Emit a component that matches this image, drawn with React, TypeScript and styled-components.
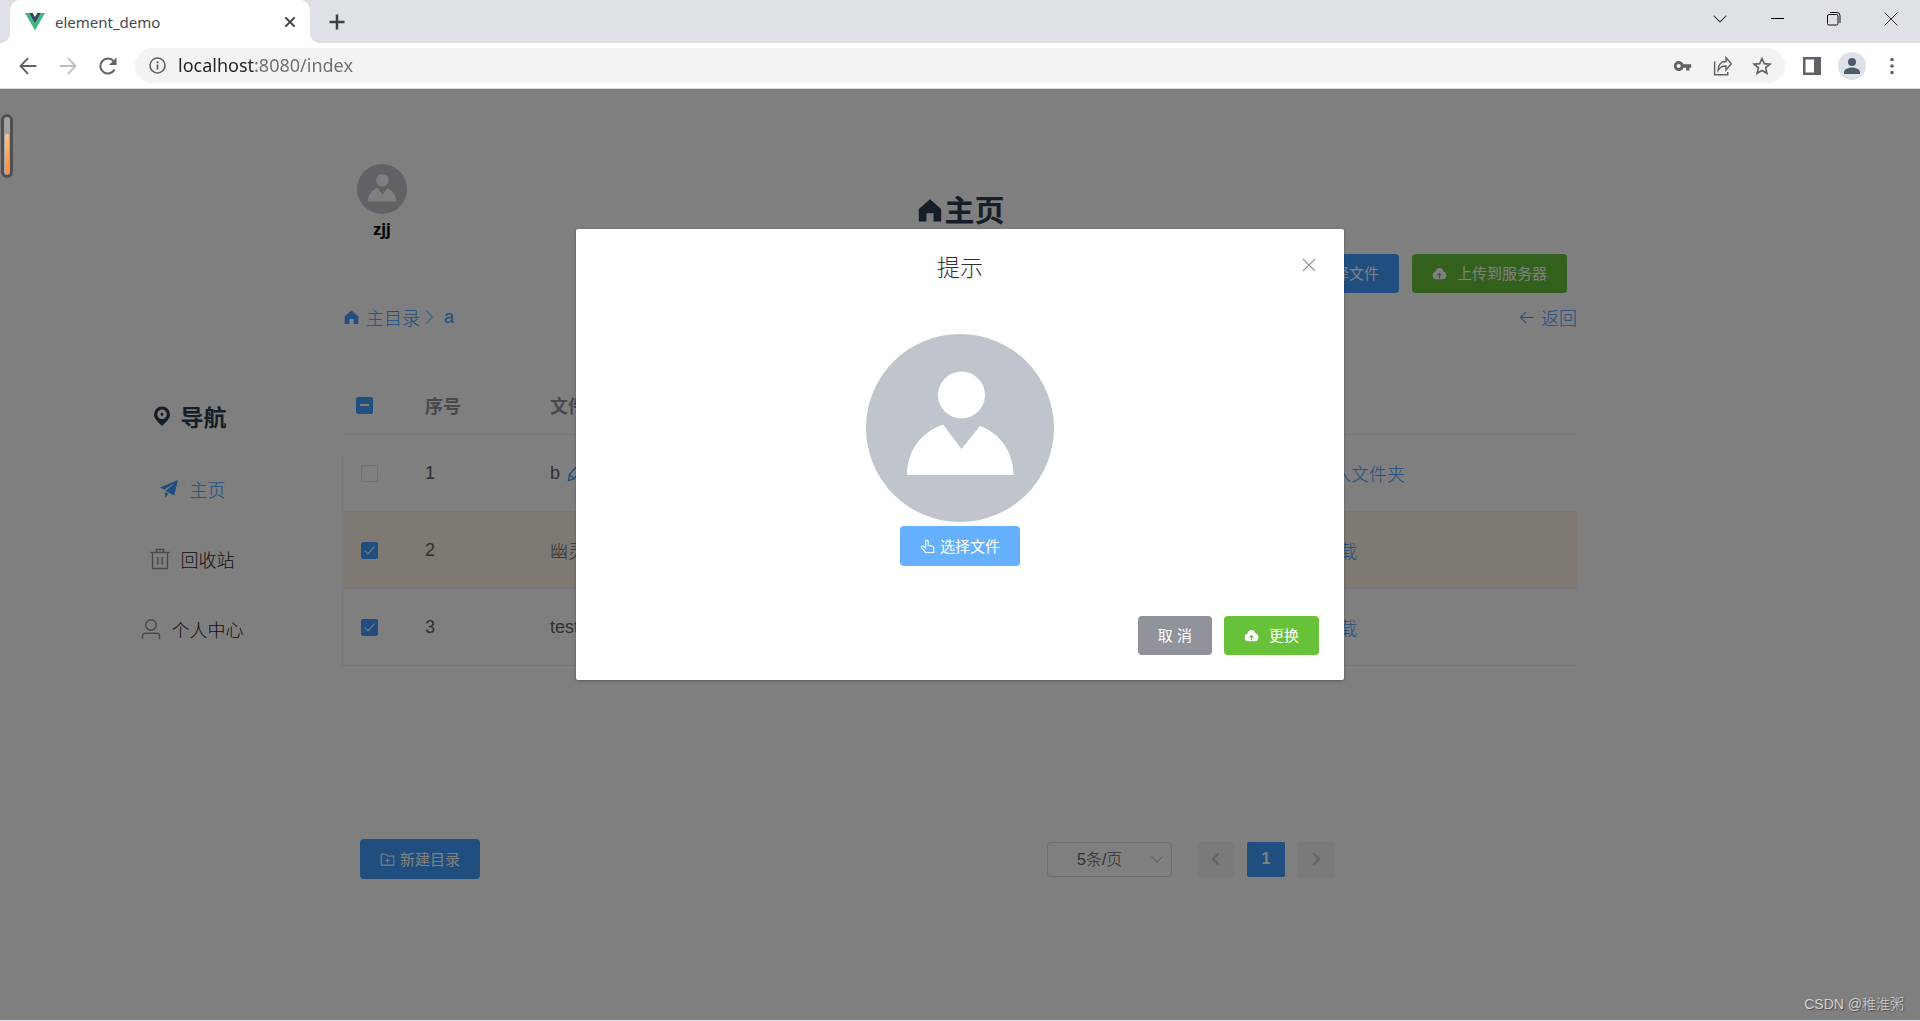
import React from 'react';
import styled, { createGlobalStyle, css } from 'styled-components';

const cjk = `"Liberation Sans", "Noto Sans CJK SC", sans-serif`;
const ui = `"Noto Sans", "Noto Sans CJK SC", sans-serif`;

const GlobalStyle = createGlobalStyle`
  *, *::before, *::after { box-sizing: border-box; }
  body { margin: 0; background: #fff; font-family: ${cjk}; font-size: 18px; font-weight: 300; color: #303133; }
  button, input, select { font: inherit; margin: 0; }
  button { cursor: pointer; }
  a { text-decoration: none; }
  svg { display: block; flex: none; }
`;

const Screen = styled.div`
  min-height: 100vh;
  display: flex;
  flex-direction: column;
  overflow: hidden;
`;

/* ---------- browser frame ---------- */

const TabStrip = styled.header`
  display: flex;
  align-items: center;
  height: 43px;
  padding: 0 17px 0 10px;
  background: #dee1e6;
`;

const Tab = styled.div`
  position: relative;
  display: flex;
  align-items: center;
  gap: 10px;
  width: 300px;
  height: 43px;
  padding: 0 9px 0 15px;
  border-radius: 10px 10px 0 0;
  background: #fff;
  font-family: ${ui};
  font-size: 15px;
  font-weight: 400;
  color: #45484c;

  &::before, &::after {
    content: '';
    position: absolute;
    bottom: 0;
    width: 10px;
    height: 10px;
  }
  &::before {
    right: 100%;
    background: radial-gradient(circle at 0 0, transparent 10px, #fff 10px);
  }
  &::after {
    left: 100%;
    background: radial-gradient(circle at 100% 0, transparent 10px, #fff 10px);
  }
`;

const TabTitle = styled.span`
  flex: 1;
`;

const IconButton = styled.button<{ $size?: number }>`
  display: flex;
  align-items: center;
  justify-content: center;
  flex: none;
  width: ${p => p.$size ?? 24}px;
  height: ${p => p.$size ?? 24}px;
  padding: 0;
  border: 0;
  background: none;
  color: #5f6368;

  &:disabled { color: #bcbfc2; }
`;

const DarkIconButton = styled(IconButton)`
  color: #3c4043;
`;

const NewTab = styled(DarkIconButton)`
  margin-left: 15px;
`;

const WindowButtons = styled.div`
  display: flex;
  align-items: center;
  gap: 33px;
  margin-left: auto;
  padding-bottom: 6px;
`;

const Toolbar = styled.div`
  display: flex;
  align-items: center;
  height: 46px;
  padding: 0 16px;
  border-bottom: 1px solid #d5d7da;
`;

const NavButtons = styled.div`
  display: flex;
  gap: 16px;
`;

const Omnibox = styled.div`
  flex: 1;
  display: flex;
  align-items: center;
  height: 35px;
  margin: 0 15px;
  padding: 0 11px 0 10px;
  border-radius: 18px;
  background: #f1f3f4;
  gap: 9px;
`;

const Address = styled.input`
  flex: 1;
  min-width: 0;
  padding: 0 0 2px;
  border: 0;
  outline: 0;
  font-family: ${ui};
  font-size: 18px;
  font-weight: 400;
  line-height: 26px;
  color: #5f6368;
  background: linear-gradient(90deg, #202124 77px, #6a6e73 77px);
  -webkit-background-clip: text;
  background-clip: text;
  -webkit-text-fill-color: transparent;
`;

const OmniboxActions = styled.div`
  display: flex;
  gap: 16px;
`;

const ToolbarEnd = styled.div`
  display: flex;
  align-items: center;
  gap: 14px;
`;

const Profile = styled(IconButton)`
  border-radius: 50%;
  background: #dee1e6;
  color: #4d5a6e;
`;

/* ---------- page ---------- */

const Page = styled.div`
  position: relative;
  flex: 1;
  padding-top: 75px;
  border-bottom: 1px solid #dcdfe6;
`;

const PageHeader = styled.header`
  display: grid;
  grid-template-columns: 1fr auto 1fr;
  padding: 0 342px;
`;

const User = styled.div`
  display: flex;
  flex-direction: column;
  align-items: center;
  width: 80px;
  font-family: ${ui};
  font-size: 16px;
  font-weight: 700;
  line-height: 30px;
  color: #000;
`;

const PageTitle = styled.h1`
  display: flex;
  align-items: center;
  gap: 1px;
  margin: 0;
  padding-top: 13px;
  font-size: 30px;
  font-weight: 700;
  line-height: 40px;
  color: #2c3e50;
`;

const Actions = styled.div`
  display: flex;
  justify-content: flex-end;
  gap: 13px;
  margin-top: 10px;
  padding: 0 353px;
`;

const tones = {
  primary: '#409eff',
  hover: '#66b1ff',
  success: '#67c23a',
  info: '#909399',
};

const Button = styled.button<{ $tone: keyof typeof tones; $gap?: number }>`
  display: inline-flex;
  align-items: center;
  justify-content: center;
  gap: ${p => p.$gap ?? 5}px;
  height: 39px;
  padding: 0 20px;
  border: 0;
  border-radius: 4px;
  background: ${p => tones[p.$tone]};
  color: #fff;
  font-size: 15px;
  font-weight: 400;
  line-height: 15px;
  white-space: nowrap;
`;

const PathRow = styled.div`
  display: flex;
  justify-content: space-between;
  align-items: center;
  height: 24px;
  margin-top: 12px;
  padding: 0 343px;
`;

const Crumbs = styled.nav`
  display: flex;
  align-items: center;
`;

const TextLink = styled.a<{ $gap?: number }>`
  display: inline-flex;
  align-items: center;
  gap: ${p => p.$gap ?? 6}px;
  color: #409eff;
`;

const Columns = styled.div`
  display: flex;
  margin-top: 47px;
`;

const Sidebar = styled.nav`
  flex: none;
  width: 342px;
  padding: 20px 0 0 40px;
`;

const SidebarTitle = styled.h2`
  display: flex;
  align-items: center;
  justify-content: center;
  gap: 7px;
  height: 40px;
  margin: 0 0 18px;
  padding-right: 6px;
  font-size: 23px;
  font-weight: 700;
  color: #2c3e50;
`;

const SidebarLink = styled.a<{ $active?: boolean }>`
  display: flex;
  align-items: center;
  justify-content: center;
  gap: 9px;
  height: 70px;
  color: ${p => (p.$active ? '#409eff' : '#1d1e20')};

  svg { color: ${p => (p.$active ? '#409eff' : '#909399')}; }
`;

const Main = styled.main`
  flex: 1;
  min-width: 0;
  padding-right: 343px;
`;

const TableFrame = styled.div`
  padding-left: 1px;
  background: linear-gradient(#ebeef5, #ebeef5) left bottom / 1px 211px no-repeat;
`;

const Table = styled.table`
  width: 100%;
  table-layout: fixed;
  border-collapse: separate;
  border-spacing: 0;
  color: #606266;
`;

const cell = css`
  padding: 0 15px;
  border-bottom: 1px solid #ebeef5;
  text-align: left;
  white-space: nowrap;
`;

const Th = styled.th`
  ${cell}
  height: 59px;
  color: #909399;
  font-weight: 700;
`;

const Td = styled.td`
  ${cell}
  height: 77px;
`;

const Row = styled.tr<{ $warm?: boolean }>`
  background: ${p => (p.$warm ? '#fdf5e6' : 'transparent')};
`;

const ColCheck = styled.col` width: 67px; `;
const ColIndex = styled.col` width: 125px; `;
const ColAction = styled.col` width: 295px; `;

const CheckTh = styled(Th)` padding: 0 0 0 13px; `;
const CheckTd = styled(Td)` padding: 0 0 0 18px; `;

const Name = styled.span`
  display: inline-flex;
  align-items: center;
  gap: 6px;
  color: #606266;
  svg { color: #409eff; }
`;

const Check = styled.input<{ $partial?: boolean }>`
  appearance: none;
  display: grid;
  place-items: center;
  width: 17px;
  height: 17px;
  border: 1px solid #dcdfe6;
  border-radius: 2px;
  background: #fff;

  &:checked { border-color: #409eff; background: #409eff; }
  &:checked::after {
    content: '';
    ${p => p.$partial
      ? css`width: 9px; height: 2px; background: #fff;`
      : css`
        width: 5px;
        height: 10px;
        margin-top: -3px;
        border: solid #fff;
        border-width: 0 1px 1px 0;
        transform: rotate(42deg);
      `}
  }
`;

const BottomBar = styled.div`
  display: flex;
  justify-content: space-between;
  align-items: center;
  margin-top: 173px;
  padding: 0 242px 0 18px;
`;

const NewFolder = styled(Button)` height: 40px; `;

const Pagination = styled.div`
  display: flex;
  gap: 12px;
`;

const SizePicker = styled.label`
  display: grid;
  align-items: center;
  width: 125px;
  margin-right: 13px;
  color: #c0c4cc;

  > * { grid-area: 1 / 1; }
  svg { justify-self: end; margin-right: 8px; }
`;

const SizeSelect = styled.select`
  appearance: none;
  width: 100%;
  height: 35px;
  padding: 0 29px;
  border: 1px solid #dcdfe6;
  border-radius: 4px;
  background: #fff;
  font-size: 16px;
  color: #606266;
`;

const PageButton = styled.button<{ $current?: boolean }>`
  display: flex;
  align-items: center;
  justify-content: center;
  width: 38px;
  height: 35px;
  padding: 0;
  border: 0;
  border-radius: 2px;
  font-size: 16px;
  font-weight: 700;
  background: ${p => (p.$current ? '#409eff' : '#f4f4f5')};
  color: ${p => (p.$current ? '#fff' : '#c0c4cc')};
`;

/* ---------- dialog ---------- */

const Overlay = styled.div`
  position: absolute;
  inset: 0;
  display: flex;
  align-items: flex-start;
  justify-content: center;
  padding-top: 140px;
  background: rgba(0, 0, 0, 0.5);
`;

const Dialog = styled.section`
  width: 40%;
  border-radius: 2px;
  background: #fff;
  box-shadow: 0 1px 3px rgba(0, 0, 0, 0.3);
`;

const DialogHead = styled.header`
  display: grid;
  grid-template-columns: 1fr auto 1fr;
  align-items: center;
  padding: 24px 23px 0;
`;

const DialogTitle = styled.h3`
  grid-column: 2;
  margin: 0;
  font-size: 23px;
  font-weight: 300;
  line-height: 30px;
`;

const CloseButton = styled(IconButton)`
  justify-self: end;
  margin-bottom: 6px;
  color: #909399;
`;

const DialogBody = styled.div`
  display: flex;
  flex-direction: column;
  align-items: center;
  gap: 4px;
  padding: 51px 25px 50px;
`;

const PickButton = styled(Button)` height: 40px; `;

const DialogFoot = styled.footer`
  display: flex;
  justify-content: flex-end;
  gap: 12px;
  padding: 0 25px 25px;
`;

/* ---------- floating extras ---------- */

const Meter = styled.div`
  position: absolute;
  top: 25px;
  left: 1px;
  display: flex;
  align-items: flex-end;
  width: 12px;
  height: 64px;
  padding: 1px;
  border: 3px solid #505050;
  border-radius: 6px;
  background: #a3a3a3;
`;

const MeterFill = styled.div`
  width: 4px;
  height: 40px;
  border-radius: 2px;
  background: linear-gradient(#fdc689, #fb8b42);
`;

const Watermark = styled.span`
  position: absolute;
  right: 16px;
  bottom: 5px;
  font-size: 14px;
  line-height: 22px;
  color: #d2d2d2;
  text-shadow: 1px 1px 1px #4a4a4a;
`;

/* ---------- icons ---------- */

type IconProps = { size?: number };

const Line = ({ size = 18, w = 1.5, d }: IconProps & { w?: number; d: string }) => (
  <svg width={size} height={size} viewBox="0 0 24 24" fill="none" stroke="currentColor" strokeWidth={w} aria-hidden>
    <path d={d} />
  </svg>
);

const Solid = ({ size = 18, d }: IconProps & { d: string }) => (
  <svg width={size} height={size} viewBox="0 0 24 24" fill="currentColor" fillRule="evenodd" aria-hidden>
    <path d={d} />
  </svg>
);

const VueLogo = () => (
  <svg width="20" height="18" viewBox="0 0 20 18" aria-hidden>
    <path d="M0 0h4l6 10.4L16 0h4L10 17.4z" fill="#41b883" />
    <path d="M4 0h3.7L10 4l2.3-4H16l-6 10.4z" fill="#35495e" />
  </svg>
);

const Home = ({ size }: IconProps) => <Solid size={size} d="M12 2 2.4 10.200V21h6.600v-7h6v7h6.600V10.200z" />;

const CloudUp = ({ arrow }: { arrow: string }) => (
  <svg width="15" height="15" viewBox="0 0 24 24" aria-hidden>
    <path d="M7 21a6.200 6.200 0 0 1-6-6.300c0-3 2-5.300 4.500-6C6.300 5.200 8.800 3 12 3s5.700 2.200 6.500 5.700c2.500.700 4.500 3 4.500 6A6.200 6.200 0 0 1 17 21z" fill="#fff" />
    <path d="M12 20v-7M8.800 15.500 12 12l3.200 3.500" fill="none" stroke={arrow} strokeWidth="1.800" />
  </svg>
);

const Pointer = () => (
  <Line size={15} w={1.8} d="M9 14V3.500a2 2 0 0 1 4 0V10l7 1.500c1.500.4 2 1.200 2 2.500v7.500H9L2.500 14c-1-1.500 1-3.500 2.700-2.300L9 15" />
);

const Avatar = ({ size = 50 }: IconProps) => (
  <svg width={size} height={size} viewBox="0 0 188 188" aria-hidden>
    <circle cx="94" cy="94" r="94" fill="#c0c4cc" />
    <circle cx="95.500" cy="61" r="23.500" fill="#fff" />
    <path d="M41 141C41 116 56 98 77 90.500L95.500 115 114 92c20 7 33.500 26 33.500 49z" fill="#fff" />
  </svg>
);

export default function App() {
  const rows = [
    { id: 1, checked: false, name: 'b' },
    { id: 2, checked: true, name: '幽灵' },
    { id: 3, checked: true, name: 'test' },
  ];
  return (
    <>
      <GlobalStyle />
      <Screen>
        <TabStrip>
          <Tab>
            <VueLogo />
            <TabTitle>element_demo</TabTitle>
            <DarkIconButton $size={22}><Line size={16} w={3} d="M5 5l14 14M19 5 5 19" /></DarkIconButton>
          </Tab>
          <NewTab><Line size={20} w={3} d="M12 3v18M3 12h18" /></NewTab>
          <WindowButtons>
            <DarkIconButton><Line size={16} w={1.6} d="M2.500 7 12 16.500 21.500 7" /></DarkIconButton>
            <DarkIconButton><svg width="13" height="13" viewBox="0 0 13 13"><path d="M0 6h13v1H0z" fill="#000" /></svg></DarkIconButton>
            <DarkIconButton>
              <svg width="14" height="14" viewBox="0 0 14 14" fill="none" stroke="#111">
                <rect x="0.500" y="2.500" width="10.500" height="10.500" rx="1.500" />
                <path d="M3 .5h7a3 3 0 0 1 3 3V11" />
              </svg>
            </DarkIconButton>
            <DarkIconButton><svg width="14" height="14" viewBox="0 0 14 14" stroke="#333"><path d="M.5.5l13 13M13.500.5l-13 13" /></svg></DarkIconButton>
          </WindowButtons>
        </TabStrip>

        <Toolbar>
          <NavButtons>
            <IconButton><Line size={20} w={2.3} d="M22 12H4M12 2.500 3 12l9 9.500" /></IconButton>
            <IconButton disabled><Line size={20} w={2.3} d="M2 12h18M12 2.500 21 12l-9 9.500" /></IconButton>
            <IconButton>
              <svg width="20" height="20" viewBox="0 0 20 20" fill="none" aria-hidden>
                <path d="M16.500 13.500A7.500 7.500 0 1 1 15.600 5.200" stroke="currentColor" strokeWidth="2" />
                <path d="M18.500 1.500V9H11z" fill="currentColor" />
              </svg>
            </IconButton>
          </NavButtons>
          <Omnibox>
            <IconButton>
              <svg width="17" height="17" viewBox="0 0 17 17" fill="none" stroke="currentColor" aria-hidden>
                <circle cx="8.500" cy="8.500" r="7.500" strokeWidth="1.600" />
                <path d="M8.500 7.500v5M8.500 4.300v2" strokeWidth="1.800" />
              </svg>
            </IconButton>
            <Address aria-label="URL" defaultValue="localhost:8080/index" />
            <OmniboxActions>
              <IconButton><Solid size={20} d="M13.800 10A6 6 0 1 0 13.800 14H17V17.500H21V14H23V10zM8 9.500a2.500 2.500 0 1 1 0 5 2.500 2.500 0 0 1 0-5z" /></IconButton>
              <IconButton><Line size={21} w={1.7} d="M3 7.500V22.500h15v-3M7 17.500c0-7 3.500-10 9-10V3l6 7-6 7v-4.500c-4-.3-7 1.500-9 5z" /></IconButton>
              <IconButton><Line size={20} w={2} d="M12 3l2.700 6.200 6.700.6-5.100 4.400 1.600 6.600L12 17.300l-5.900 3.500 1.600-6.600L2.600 9.800l6.700-.6z" /></IconButton>
            </OmniboxActions>
          </Omnibox>
          <ToolbarEnd>
            <IconButton><svg width="18" height="18" viewBox="0 0 18 18"><path fill="currentColor" fillRule="evenodd" d="M0 0h18v18H0zM2.500 2.500v13H11v-13z" /></svg></IconButton>
            <Profile $size={28}><Solid size={24} d="M12 4a4 4 0 1 1 0 8 4 4 0 0 1 0-8zM4 20v-2c0-3 5-4.500 8-4.500s8 1.500 8 4.500v2z" /></Profile>
            <IconButton><Solid size={20} d="M12 2a2.200 2.200 0 1 1 0 4.400 2.200 2.200 0 0 1 0-4.400zM12 9.800a2.200 2.200 0 1 1 0 4.400 2.200 2.200 0 0 1 0-4.400zM12 17.600a2.200 2.200 0 1 1 0 4.400 2.200 2.200 0 0 1 0-4.400z" /></IconButton>
          </ToolbarEnd>
        </Toolbar>

        <Page>
          <PageHeader>
            <User><Avatar />zjj</User>
            <PageTitle><Home size={28} />主页</PageTitle>
          </PageHeader>

          <Actions>
            <Button $tone="primary"><Pointer />选择文件</Button>
            <Button $tone="success" $gap={10}><CloudUp arrow="#67c23a" />上传到服务器</Button>
          </Actions>

          <PathRow>
            <Crumbs>
              <TextLink href="#root"><Home size={17} />主目录</TextLink>
              <TextLink href="#a"><Line size={18} w={1.3} d="M8 3l8.500 9L8 21" />a</TextLink>
            </Crumbs>
            <TextLink href="#back"><Line size={17} w={1.6} d="M22 12H4M11.500 4 3.500 12l8 8" />返回</TextLink>
          </PathRow>

          <Columns>
            <Sidebar>
              <SidebarTitle>
                <Solid size={24} d="M12 2.500a8 8 0 0 1 8 8c0 4.500-4 7.500-8 11.500-4-4-8-7-8-11.500a8 8 0 0 1 8-8zM12 5.500a4.800 4.800 0 1 0 0 9.600 4.800 4.800 0 0 0 0-9.600zM12 8.800a1.500 1.500 0 1 1 0 3 1.500 1.500 0 0 1 0-3z" />
                导航
              </SidebarTitle>
              <SidebarLink href="#index" $active>
                <Solid size={24} d="M21 3 3 10.500l4 2.200L18 6 8.500 14l8.700 4.500zM8 15v6l3.500-4.200z" />
                主页
              </SidebarLink>
              <SidebarLink href="#recycle">
                <Line size={24} w={1.4} d="M2.500 5.500h19M4.500 5.500v16h15v-16M8.500 5V2.500h7V5M9.800 10v7.500M14.200 10v7.500" />
                回收站
              </SidebarLink>
              <SidebarLink href="#profile">
                <Line size={24} w={1.5} d="M12 2.800a5.200 5.200 0 1 1 0 10.400 5.200 5.200 0 0 1 0-10.400zM3.500 22v-3a2.800 2.800 0 0 1 2.800-2.800h11.400a2.800 2.800 0 0 1 2.800 2.800v3" />
                个人中心
              </SidebarLink>
            </Sidebar>

            <Main>
              <TableFrame>
                <Table>
                  <colgroup><ColCheck /><ColIndex /><col /><ColAction /></colgroup>
                  <thead>
                    <tr>
                      <CheckTh><Check type="checkbox" aria-label="全选" defaultChecked $partial /></CheckTh>
                      <Th>序号</Th>
                      <Th>文件名</Th>
                      <Th />
                    </tr>
                  </thead>
                  <tbody>
                    {rows.map(r => (
                      <Row key={r.id} $warm={r.id === 2}>
                        <CheckTd><Check type="checkbox" aria-label={r.name} defaultChecked={r.checked} /></CheckTd>
                        <Td>{r.id}</Td>
                        <Td>
                          <Name>
                            {r.name}
                            {r.id === 1 && <Line size={20} w={1.6} d="M3 21l1-7L14 3l5 4-9.500 12zM4 14l5.500 4.500" />}
                          </Name>
                        </Td>
                        <Td>
                          {r.id === 1
                            ? <TextLink href="#open" $gap={4}><Line size={14} d="M2 4h8l2 3h10v13H2z" />进入文件夹</TextLink>
                            : <TextLink href="#download" $gap={10}><Line size={14} d="M12 3v13M6 11l6 6 6-6M3 21h18" />下载</TextLink>}
                        </Td>
                      </Row>
                    ))}
                  </tbody>
                </Table>
              </TableFrame>

              <BottomBar>
                <NewFolder $tone="primary">
                  <Line size={15} w={1.7} d="M2 3.500h7.500l2.500 3h10V21H2zM12 10v7M8.500 13.500h7" />
                  新建目录
                </NewFolder>
                <Pagination>
                  <SizePicker>
                    <SizeSelect aria-label="每页条数"><option>5条/页</option></SizeSelect>
                    <Line size={14} w={1.8} d="M2.500 7.500 12 17l9.500-9.500" />
                  </SizePicker>
                  <PageButton disabled aria-label="上一页"><Line size={16} w={3} d="M16 3.500 7.500 12l8.500 8.500" /></PageButton>
                  <PageButton $current>1</PageButton>
                  <PageButton disabled aria-label="下一页"><Line size={16} w={3} d="M8 3.500 16.500 12 8 20.500" /></PageButton>
                </Pagination>
              </BottomBar>
            </Main>
          </Columns>

          <Overlay>
            <Dialog role="dialog" aria-label="提示">
              <DialogHead>
                <DialogTitle>提示</DialogTitle>
                <CloseButton aria-label="关闭"><Line size={18} w={1.5} d="M4 4l16 16M20 4 4 20" /></CloseButton>
              </DialogHead>
              <DialogBody>
                <Avatar size={188} />
                <PickButton $tone="hover"><Pointer />选择文件</PickButton>
              </DialogBody>
              <DialogFoot>
                <Button $tone="info">取 消</Button>
                <Button $tone="success" $gap={10}><CloudUp arrow="#67c23a" />更换</Button>
              </DialogFoot>
            </Dialog>
            <Meter><MeterFill /></Meter>
            <Watermark>CSDN @稚淮粥</Watermark>
          </Overlay>
        </Page>
      </Screen>
    </>
  );
}
